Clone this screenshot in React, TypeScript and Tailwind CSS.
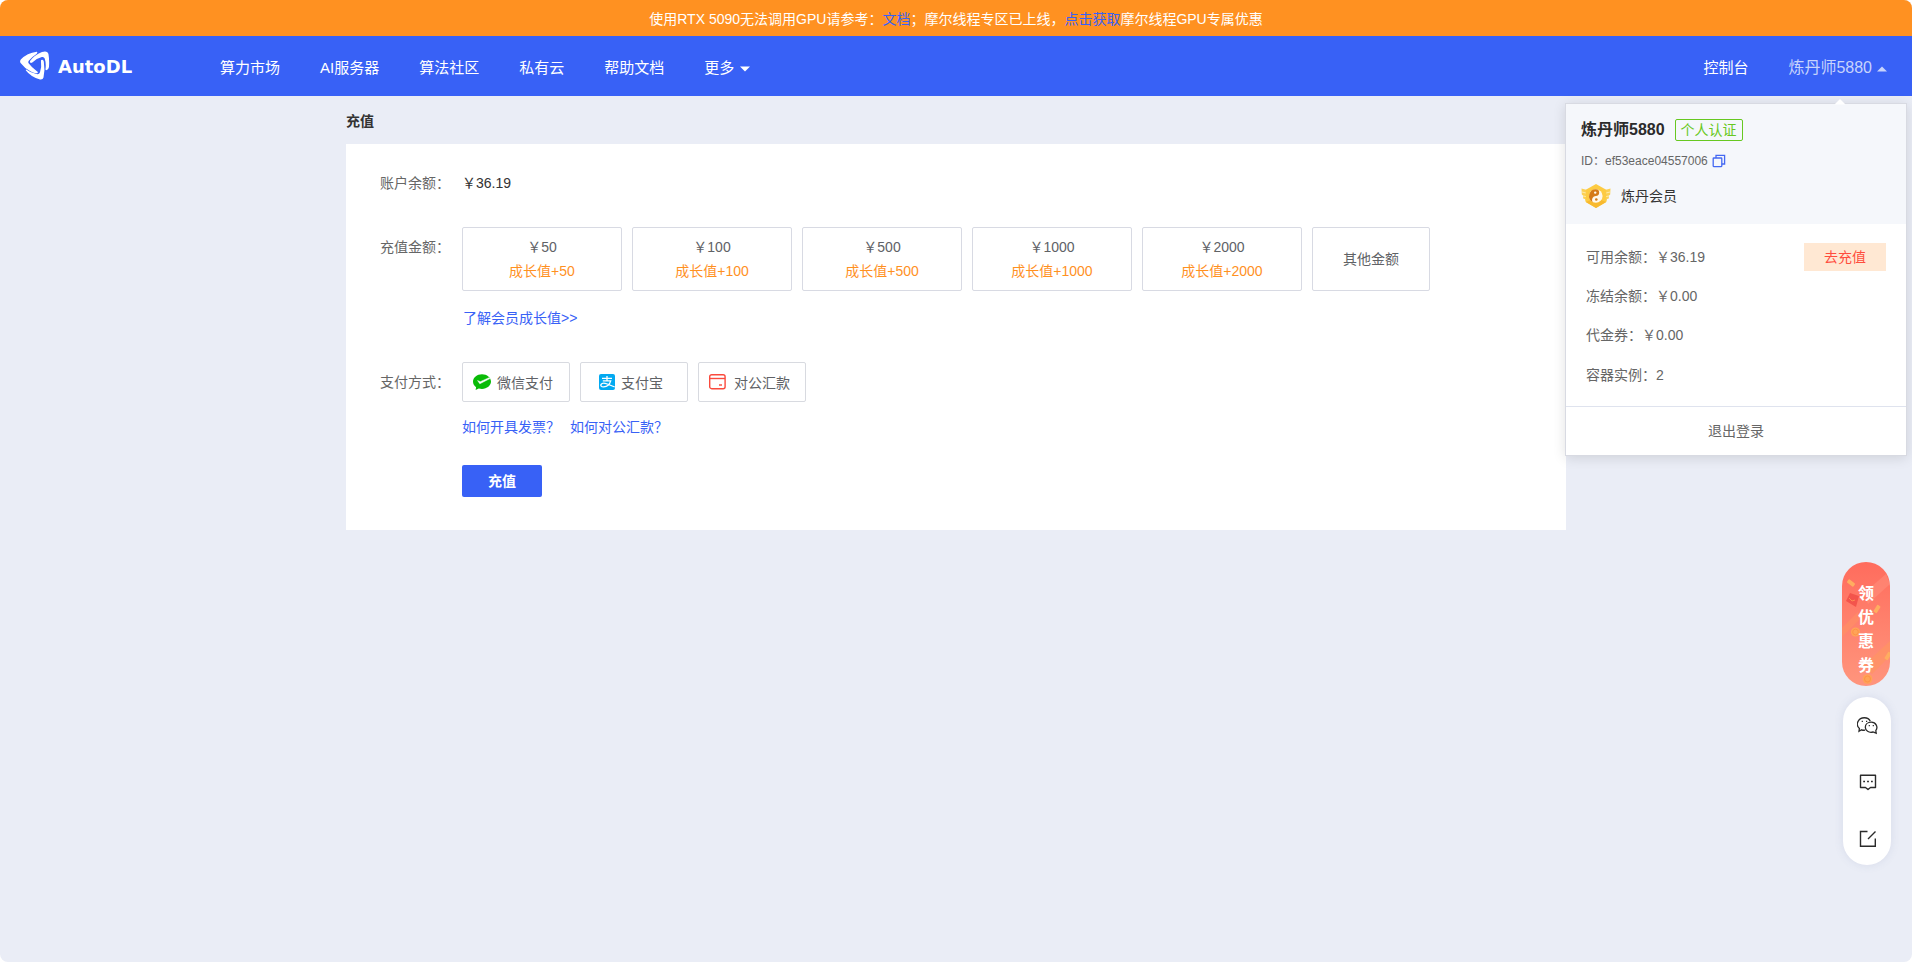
import type { ReactNode } from "react";

const navItems = ["算力市场", "AI服务器", "算法社区", "私有云", "帮助文档"];
const amounts = [50, 100, 500, 1000, 2000];
const accountRows = [
  { label: "可用余额：", value: "￥36.19" },
  { label: "冻结余额：", value: "￥0.00" },
  { label: "代金券：", value: "￥0.00" },
  { label: "容器实例：", value: "2" },
];

function Logo() {
  return (
    <div className="flex items-center text-white">
      <svg width="30" height="29" viewBox="0 0 30 29" fill="currentColor">
        <path d="M16.800 0.800 Q7 2 0.800 8.600 Q-0.500 10.200 0.600 12 Q4.500 17.300 10.800 20.600 Q15 22.700 17.600 22 Q18.200 21 17.200 20.500 Q11.500 16.300 8.600 12.300 Q7.800 10.800 9 9.500 Q11.500 6.300 16.500 3 Q18 1.500 16.800 0.800Z" />
        <path d="M10.200 9.800 Q14 4.300 22 1 Q27.500 -0.800 28.500 3.200 Q29.500 9 29 15.500 Q28.600 18.800 26.200 19.200 Q25.400 19.200 25.500 18 Q26.300 12.500 24.700 7.600 Q24 5.600 21.800 6.100 Q16.500 7.300 12.300 11.500 Q10.900 12.400 10.200 11.600 Q9.700 10.800 10.200 9.800Z" />
        <path d="M22 8.800 Q20.500 9 21 10.800 Q21.800 16 20 21.200 Q19.200 23.700 16.500 23.100 Q11 22 6.200 18.500 Q5.600 18.500 5.900 19.400 Q10.800 25.700 20 28.500 Q22.800 29 23.500 26.500 Q25.200 18.500 23.800 10.500 Q23.400 8.600 22 8.800Z" />
      </svg>
      <span className="ml-2 pt-0.5 font-['DejaVu_Sans'] text-[18px] leading-[27px] font-bold">AutoDL</span>
    </div>
  );
}

function MemberBadge() {
  return (
    <svg width="30" height="24" viewBox="0 0 30 24">
      <path d="M0.500 4.500 L8 6.500 V18 L4.500 17.500 L4 15 L2.200 14.500 L2 11.500 L0.800 10.500Z" fill="#fbd054" />
      <path d="M29.500 4.500 L22 6.500 V18 L25.500 17.500 L26 15 L27.800 14.500 L28 11.500 L29.200 10.500Z" fill="#fbd054" />
      <path d="M1 8 L7 9.500 M2 12 L7 13 M29 8 L23 9.500 M28 12 L23 13" stroke="#fff0bd" strokeWidth="0.8" />
      <path d="M15 0 L25.200 5.800 V18 L15 24 L4.800 18 V5.800Z" fill="#fdcb42" />
      <path d="M4.800 18 L15 24 L25.200 18 L15 14Z" fill="#f8b92f" />
      <circle cx="14.800" cy="12" r="6.800" fill="#fff8ea" />
      <path d="M14.800 5.200 A6.800 6.800 0 0 0 11.500 17.900 A4 4 0 0 1 14.800 12 A3.400 3.400 0 0 0 14.800 5.200Z" fill="#d57a17" />
      <circle cx="14.200" cy="8.600" r="1.200" fill="#fff8ea" />
      <circle cx="15.300" cy="15.500" r="1.300" fill="#d57a17" />
    </svg>
  );
}

function WechatPayIcon() {
  return (
    <svg width="18" height="17" viewBox="0 0 18 17">
      <path d="M9 0.200C4 0.200 0 3.500 0 7.600c0 2.300 1.200 4.300 3.100 5.700l-.5 2.700 3.200-1.500c1 .3 2.100.4 3.200.4 5 0 9-3.300 9-7.300S14 0.200 9 0.200Z" fill="#09bb07" />
      <path d="M4.600 6.600 L6.800 9.800 L17 4.500 L16 3.700 L7.300 7.700Z" fill="#fff" stroke="#fff" strokeWidth="0.500" strokeLinejoin="round" />
    </svg>
  );
}

function AlipayIcon() {
  return (
    <svg width="16" height="16" viewBox="0 0 16 16" fill="none">
      <rect width="16" height="16" rx="2" fill="#02a9f1" />
      <path d="M3 4.300 H13 M8 2 V7 M3.800 6.900 H11.700 C11 9.400 9 12.700 4.700 12.900 C2.200 13 1.400 11.700 2.100 10.400 C3 8.900 5.800 9 8.200 10 L15.800 13" stroke="#fff" strokeWidth="1.300" />
    </svg>
  );
}

function BankIcon() {
  return (
    <svg width="17" height="16" viewBox="0 0 17 16" fill="none" stroke="#fa4a3d">
      <rect x="0.700" y="0.700" width="15.400" height="14" rx="2" strokeWidth="1.400" />
      <path d="M0.700 4.500 H16" strokeWidth="1.400" />
      <path d="M10 11 H13" strokeWidth="1.400" />
    </svg>
  );
}

function WechatIcon() {
  return (
    <svg width="21" height="18" viewBox="0 0 21 18" fill="none" stroke="#2b2b2b" strokeWidth="1.300">
      <path d="M8 13.200 Q6 13.400 4.600 12.800 L2 14.300 L2.400 11.400 A6.300 5.900 0 0 1 1.200 4.200 C3.300 -0.200 11.200 -0.600 13.300 4.300" />
      <path d="M14.300 5.200 C10.600 5.200 8.300 7.600 8.300 10.300 C8.300 13.600 11.800 16.100 16 15 L19.200 16.200 L18.800 13.600 C21.400 10.300 19 5.200 14.300 5.200Z" />
      <path d="M4.700 4.300h1.200M9 4.300h1.200M11.700 8.700h1.200M15.700 8.700h1.200" />
    </svg>
  );
}

function ChatIcon() {
  return (
    <svg width="18" height="17" viewBox="0 0 18 17" fill="none" stroke="#2b2b2b" strokeWidth="1.400">
      <path d="M1.500 1.200 H16.500 V13.500 H11.500 L9 15.500 L6.500 13.500 H1.500Z" strokeLinejoin="round" />
      <path d="M4.200 7.500h1.800M8.100 7.500h1.800M12 7.500h1.800" strokeWidth="1.600" />
    </svg>
  );
}

function EditIcon() {
  return (
    <svg width="18" height="18" viewBox="0 0 18 18" fill="none" stroke="#2b2b2b" strokeWidth="1.400">
      <path d="M8.500 1.500 H1.500 V16.300 H16.300 V8.500 M9 9 L16.500 1.500" />
    </svg>
  );
}

function CopyIcon() {
  return (
    <svg width="14" height="14" viewBox="0 0 14 14" fill="none" stroke="#4468f2" strokeWidth="1.300">
      <rect x="1.200" y="4" width="8.600" height="8.600" rx="0.500" />
      <path d="M4 4 V1.400 H12.600 V10 H10" />
    </svg>
  );
}

function CouponDecor() {
  return (
    <svg className="absolute inset-0" width="48" height="124" viewBox="0 0 48 124">
      <path d="M22 31 L44 12 L48 22 L26 42Z" fill="#ff9b87" opacity=".4" />
      <path d="M0 66 L16 50 L18 57 L0 75Z" fill="#ff9462" opacity=".5" />
      <path d="M22 103 L48 79 V94 L30 112Z" fill="#ff9462" opacity=".7" />
      <rect x="5" y="19" width="8" height="4" rx="1" transform="rotate(36 9 21)" fill="#ffad60" />
      <rect x="31" y="45" width="8" height="4" rx="1" transform="rotate(-58 35 47)" fill="#ffad60" />
      <rect x="42" y="92" width="8" height="4" rx="1" transform="rotate(-58 46 94)" fill="#ffad60" />
      <path d="M8 31 L17 34 L14 45 L4 39Z" fill="#f3544c" />
      <path d="M7 36 l3 3 l3 -1" stroke="#ff8a53" fill="none" />
      <circle cx="13.500" cy="70" r="4.600" fill="#ffa457" />
      <circle cx="13.500" cy="70" r="2.800" fill="none" stroke="#ff8d45" strokeWidth=".8" />
      <circle cx="25.500" cy="117" r="4.800" fill="#ffa457" />
      <circle cx="25.500" cy="117" r="3" fill="none" stroke="#ff8d45" strokeWidth=".8" />
    </svg>
  );
}

function Row({ label, children }: { label: string; children: ReactNode }) {
  return (
    <div className="flex">
      <div className="w-[82px] shrink-0 leading-10 text-[#666]">{label}</div>
      <div>{children}</div>
    </div>
  );
}

function AccountPanel() {
  return (
    <aside className="absolute top-[103px] left-[1565px] h-[353px] w-[342px] border border-[#d8dae2] bg-white text-[#666] shadow-[0_2px_12px_rgba(0,0,0,0.12)]">
      <svg className="absolute -top-[7px] left-[267px]" width="14" height="8" viewBox="0 0 14 8">
        <path d="M1.500 7.500 L7 2 L12.500 7.500Z" fill="#fff" />
      </svg>
      <div className="h-[120px] bg-[#f5f7fb] px-[15px] pt-[14px]">
        <div className="flex h-[23px] items-center">
          <span className="text-base font-bold text-[#2b2b2b]">炼丹师5880</span>
          <span className="ml-[10px] h-[22px] w-[68px] rounded-[2px] border border-[#67c821] text-center text-sm leading-5 text-[#67c821]">个人认证</span>
        </div>
        <div className="mt-[10px] flex h-5 items-center text-xs">
          <span>ID：ef53eace04557006</span>
          <span className="ml-1"><CopyIcon /></span>
        </div>
        <div className="mt-[13px] flex h-6 items-center">
          <MemberBadge />
          <span className="ml-[10px] text-sm text-[#333]">炼丹会员</span>
        </div>
      </div>
      <div className="flex h-[183px] flex-col border-b border-[#dfe3ee] pt-[13px] pr-5 pl-5">
        {accountRows.map((row, i) => (
          <div key={row.label} className="flex h-[39.300px] shrink-0 items-center justify-between text-sm">
            <span>{row.label}{row.value}</span>
            {i === 0 && <button className="mt-px h-7 w-[82px] bg-[#ffe8d3] pb-px text-sm text-[#ff4d3d]">去充值</button>}
          </div>
        ))}
      </div>
      <button className="h-[48px] w-full pb-px text-center text-sm">退出登录</button>
    </aside>
  );
}

export default function App() {
  return (
    <div className="relative h-[962px] w-[1912px] overflow-hidden rounded-lg bg-[#eaedf6] font-['Liberation_Sans','Noto_Sans_CJK_SC',sans-serif] text-sm text-[#333]">
      <div className="flex h-9 items-center justify-center bg-[#ff9121] pt-[2px] text-sm text-white">
        <p>
          使用RTX 5090无法调用GPU请参考：<a className="text-[#3861f6]">文档</a>；摩尔线程专区已上线，<a className="text-[#3861f6]">点击获取</a>摩尔线程GPU专属优惠
        </p>
      </div>
      <header className="flex h-[60px] items-center bg-[#3861f6] pr-6 pl-5 text-[15px] text-white">
        <div className="w-[200px] pb-0.5"><Logo /></div>
        <nav className="flex flex-1 items-center gap-10 pt-[3px]">
          {navItems.map((item) => <a key={item}>{item}</a>)}
          <a className="flex items-center gap-[5px]">更多
            <svg className="mt-1" width="12" height="6" viewBox="0 0 12 6"><path d="M1 0.500H11L6 5.500Z" fill="#fff" /></svg>
          </a>
        </nav>
        <a className="mr-10 pt-[3px]">控制台</a>
        <a className="flex items-center gap-[4px] pt-[3px] text-base text-[#c7d3fc]">炼丹师5880
          <svg className="mt-0.5" width="12" height="6" viewBox="0 0 12 6"><path d="M1 5.500H11L6 0.500Z" fill="currentColor" /></svg>
        </a>
      </header>

      <main className="mx-auto w-[1220px]">
        <h1 className="h-12 text-sm leading-[50px] font-bold">充值</h1>
        <section className="h-[386px] bg-white pt-[19px] pl-[34px]">
          <Row label="账户余额：">
            <p className="leading-10">￥36.19</p>
          </Row>
          <div className="mt-6">
            <Row label="充值金额：">
              <div className="flex gap-[10px] text-[#606266]">
                {amounts.map((amount) => (
                  <button key={amount} className="h-16 w-40 rounded-[2px] border border-[#d8dae3] pb-px text-center leading-6">
                    <span className="block">￥{amount}</span>
                    <span className="block text-[#ff911f]">成长值+{amount}</span>
                  </button>
                ))}
                <button className="h-16 w-[118px] rounded-[2px] border border-[#d8dae3]">其他金额</button>
              </div>
              <a className="mt-[17px] block pl-px leading-5 text-[#3861f6]">了解会员成长值&gt;&gt;</a>
            </Row>
          </div>
          <div className="mt-[34px]">
            <Row label="支付方式：">
              <div className="flex gap-[10px] text-[#606266]">
                <button className="flex h-10 w-[108px] items-center justify-center gap-1.5 rounded-[2px] border border-[#d8dae0] pr-[6px]"><WechatPayIcon /><span className="pt-px">微信支付</span></button>
                <button className="flex h-10 w-[108px] items-center justify-center gap-1.5 rounded-[2px] border border-[#d8dae0] pr-[6px]"><AlipayIcon /><span className="pt-px">支付宝</span></button>
                <button className="flex h-10 w-[108px] items-center justify-center gap-2 rounded-[2px] border border-[#d8dae0] pr-[5px]"><BankIcon /><span className="pt-px">对公汇款</span></button>
              </div>
              <div className="mt-[15px] flex gap-[10px] leading-5 text-[#3861f6]">
                <a>如何开具发票？</a>
                <a>如何对公汇款？</a>
              </div>
              <button className="mt-7 block h-8 w-20 rounded-[2px] bg-[#3861f6] text-sm font-bold text-white">充值</button>
            </Row>
          </div>
        </section>
      </main>

      <AccountPanel />

      <div className="absolute top-[562px] left-[1842px] flex flex-col gap-[11px]">
        <div className="relative h-[124px] w-12 overflow-hidden rounded-full bg-linear-to-b from-[#ff6c5d] to-[#ff957d]">
          <CouponDecor />
          <div className="relative flex flex-col items-center pt-5 text-base leading-6 font-bold text-white">
            <span>领</span><span>优</span><span>惠</span><span>券</span>
          </div>
        </div>
        <div className="ml-px flex h-[168px] w-12 flex-col items-center rounded-full bg-white pt-5 shadow-[0_0_10px_rgba(80,95,150,0.12)]">
          <span className="flex h-[57px] items-start"><WechatIcon /></span>
          <span className="flex h-14 items-start pl-0.5"><ChatIcon /></span>
          <span className="pl-0.5"><EditIcon /></span>
        </div>
      </div>
    </div>
  );
}
